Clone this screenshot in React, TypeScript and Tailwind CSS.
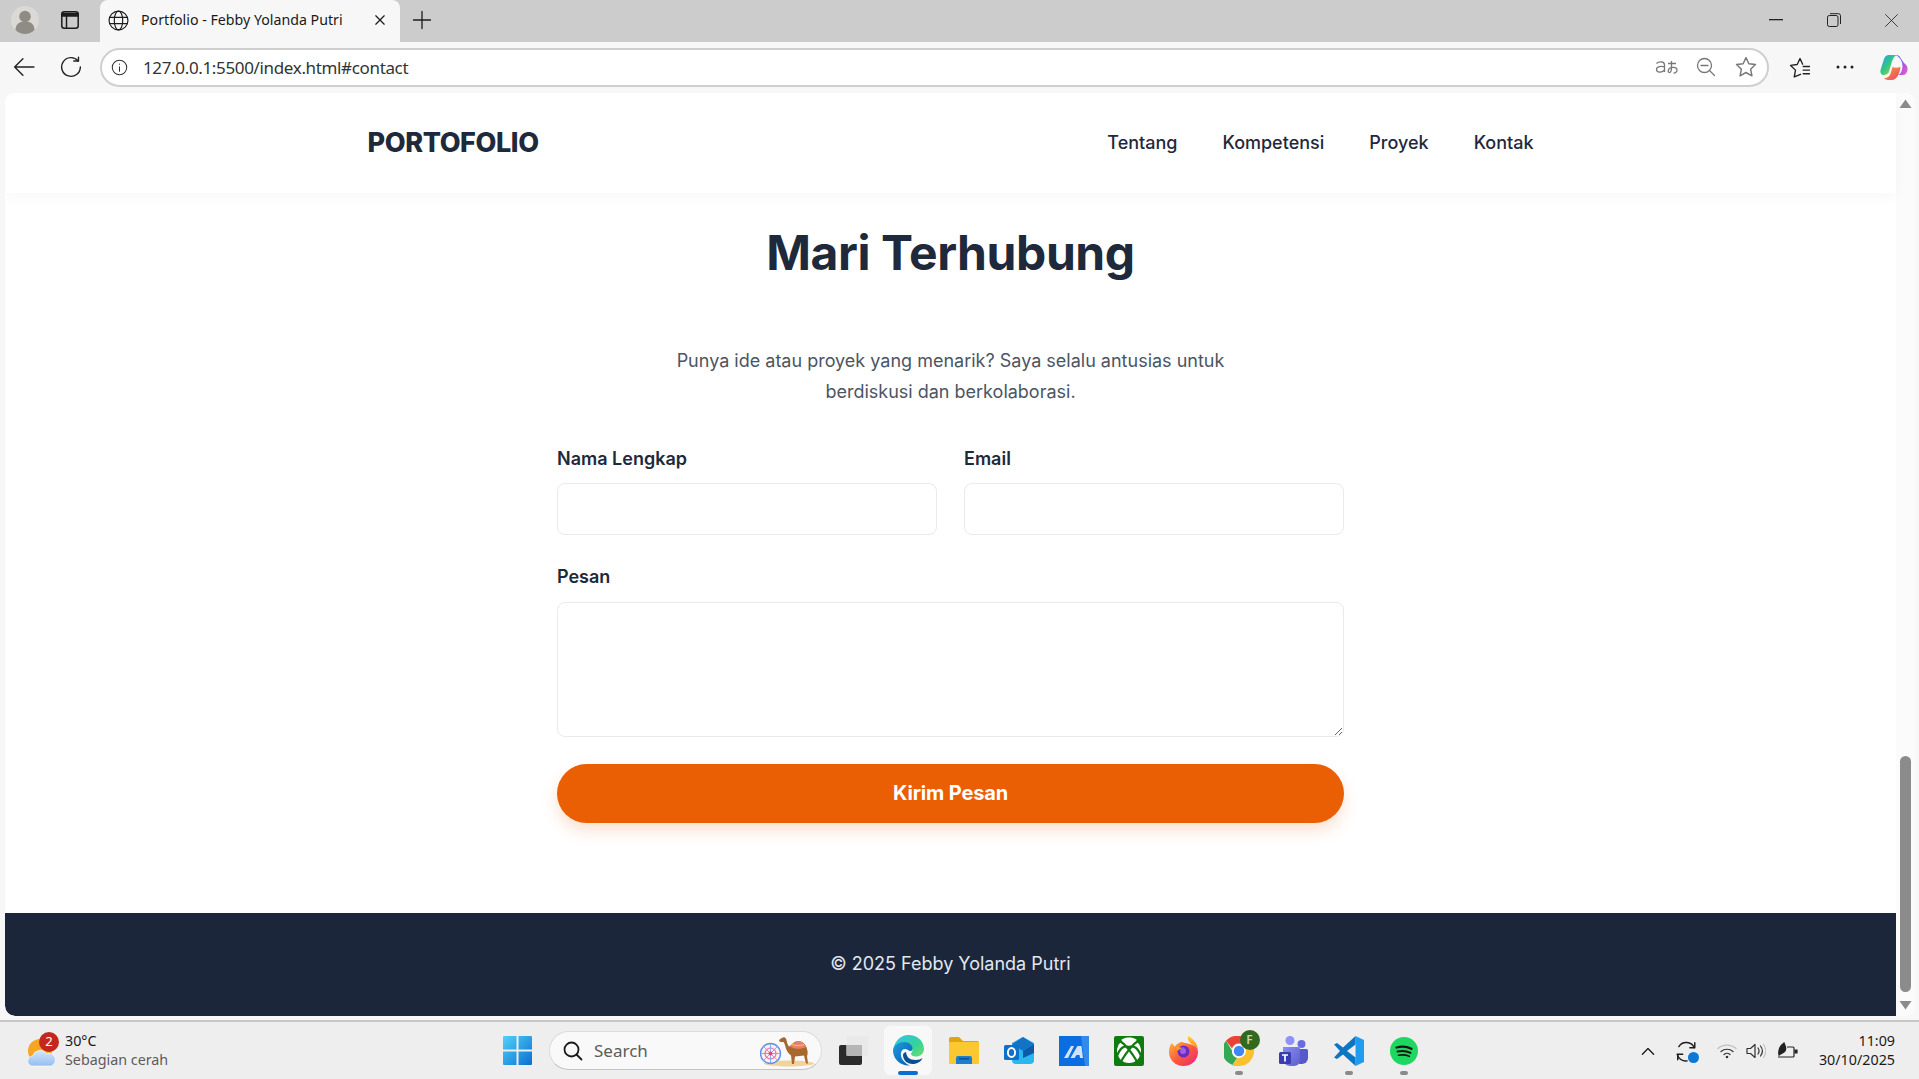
import type { ReactNode } from 'react';

const chromeFont = { fontFamily: '"Noto Sans", "Open Sans", sans-serif' };

const Stroke = ({ size = 20, children, color = '#222', width = 1.4 }: { size?: number; children: ReactNode; color?: string; width?: number }) => (
  <svg width={size} height={size} viewBox="0 0 20 20" fill="none" stroke={color} strokeWidth={width} strokeLinecap="round" strokeLinejoin="round">
    {children}
  </svg>
);

const TabStrip = () => (
  <div className="flex h-[42px] shrink-0 items-end bg-[#cccccc]">
    <div className="flex h-[40px] w-[50px] items-center justify-center self-start">
      <svg width="28" height="28" viewBox="0 0 28 28">
        <circle cx="14" cy="14" r="14" fill="#dbd9d5" />
        <circle cx="14" cy="10.5" r="5.8" fill="#8f8b85" />
        <path d="M4.5 24c0-6 4-8.5 9.5-8.5s9.5 2.5 9.5 8.5c-2.5 2.6-5.8 4-9.5 4s-7-1.4-9.5-4z" fill="#8f8b85" />
      </svg>
    </div>
    <div className="flex h-[40px] w-[40px] items-center justify-center self-start">
      <svg width="18" height="18" viewBox="0 0 18 18" fill="none" stroke="#1c1c1c" strokeWidth="1.5">
        <rect x="0.8" y="0.8" width="16.4" height="16.4" rx="2.5" />
        <path d="M1 2.5h16V5H1z" fill="#1c1c1c" />
        <path d="M5.5 5v12" />
      </svg>
    </div>
    <div className="ml-[10px] flex h-[42px] w-[300px] items-center rounded-t-lg bg-[#f7f7f7] pb-[2px] pl-[8px] pr-[13px]" style={chromeFont}>
      <Stroke size={21} width={1.1} color="#1c1c1c">
        <circle cx="10" cy="10" r="9" />
        <ellipse cx="10" cy="10" rx="4" ry="9" />
        <path d="M1.8 7h16.4M1.8 13h16.4" />
      </Stroke>
      <span className="ml-[12px] flex-1 text-[14.2px] text-[#1a1a1a]">Portfolio - Febby Yolanda Putri</span>
      <Stroke size={14} width={1.8} color="#1c1c1c">
        <path d="M4 4l12 12M16 4L4 16" />
      </Stroke>
    </div>
    <div className="flex h-[40px] w-[44px] items-center justify-center self-start">
      <Stroke size={20} width={1.3} color="#1c1c1c">
        <path d="M10 1.5v17M1.5 10h17" />
      </Stroke>
    </div>
    <div className="ml-auto flex h-[40px] items-center self-start">
      <div className="flex w-[58px] justify-center">
        <svg width="14" height="2"><rect width="14" height="1.3" fill="#222" /></svg>
      </div>
      <div className="flex w-[58px] justify-center">
        <svg width="14" height="14" viewBox="0 0 14 14" fill="none" stroke="#222" strokeWidth="1">
          <rect x="0.5" y="2.5" width="10.5" height="11" rx="1.8" />
          <path d="M3 0.7h8.5a2 2 0 0 1 2 2V11" />
        </svg>
      </div>
      <div className="flex w-[56px] justify-center">
        <Stroke size={15} width={1.1}>
          <path d="M2 2l16 16M18 2L2 18" />
        </Stroke>
      </div>
    </div>
  </div>
);

const CopilotIcon = () => (
  <svg width="28" height="27" viewBox="0 0 28 27">
    <defs>
      <linearGradient id="copA" x1="0" y1="0" x2="1" y2="1">
        <stop offset="0" stopColor="#1f9cf5" />
        <stop offset="0.5" stopColor="#35c97f" />
        <stop offset="1" stopColor="#f5d32e" />
      </linearGradient>
      <linearGradient id="copB" x1="0" y1="0" x2="1" y2="1">
        <stop offset="0" stopColor="#2f6df0" />
        <stop offset="0.5" stopColor="#a04fe6" />
        <stop offset="1" stopColor="#ee66c4" />
      </linearGradient>
      <linearGradient id="copC" x1="0" y1="0" x2="1" y2="1">
        <stop offset="0" stopColor="#f9a03c" />
        <stop offset="1" stopColor="#ef3f66" />
      </linearGradient>
    </defs>
    <path d="M9 1h8c-3 1-4.5 4-5.5 8l-2.5 9C8 20 6 21 4 21 1.5 21 0 19 .5 16L4 5C5 2.5 6.5 1 9 1z" fill="url(#copA)" />
    <path d="M16 1c2.5 0 4 1.5 4.800 3.500L24 9c2.500 2 4 3.500 3.500 7-.5 3-2 5-5 5h-5c3 0 4.500-4 5-8 .3-4-1.500-9-6.500-12z" fill="url(#copB)" />
    <path d="M8 26c-1.500 0-3-.8-4-2 4 0 6-2 7-6l1.500-5c2 1 5 1 8 0-.5 5-3 13-9 13z" fill="url(#copC)" />
  </svg>
);

const Toolbar = () => (
  <div className="flex h-[50px] shrink-0 items-center bg-[#f7f7f7]" style={chromeFont}>
    <div className="flex w-[47px] justify-center">
      <Stroke size={22} width={1.3}>
        <path d="M19 10H1.5M9 2.5L1.5 10 9 17.5" />
      </Stroke>
    </div>
    <div className="ml-[-1px] flex w-[49px] justify-center">
      <Stroke size={22} width={1.3}>
        <path d="M16.5 4.5A8.5 8.5 0 1 0 18.5 10" />
        <path d="M12.5 4.5h4.3V1" />
      </Stroke>
    </div>
    <div className="ml-[5px] flex h-[39px] w-[1669px] items-center rounded-full border-2 border-[#cfcfcf] bg-white pl-[9px]">
      <Stroke size={17} width={1.2} color="#333">
        <circle cx="10" cy="10" r="8.5" />
        <path d="M10 9v5.500M10 5.800v.3" />
      </Stroke>
      <span className="ml-[15px] flex-1 pt-[1px] text-[17px] tracking-[-0.35px] text-[#333]">127.0.0.1:5500/index.html#contact</span>
      <div className="flex items-center pr-[1px]">
        <div className="flex w-[40px] justify-center">
          <svg width="23" height="18" viewBox="0 0 23 18" fill="none" stroke="#777" strokeWidth="1.3">
            <path d="M1.5 5.5c2-2.200 8-2.500 8 1.500v7M9.5 9c-3-1.200-8-.8-8 2.500s5.500 3.500 8 .5" />
            <path d="M13 5.500h8M16.500 3v7c0 3-1 5-2.500 4.500s-1-4 2-4.800 6-.2 6 2.200-2 3-3.500 3.200" />
          </svg>
        </div>
        <div className="flex w-[40px] justify-center">
          <Stroke size={20} width={1.3} color="#777">
            <circle cx="8.5" cy="8.5" r="7" />
            <path d="M13.5 13.5l5 5M5 8.5h7" />
          </Stroke>
        </div>
        <div className="flex w-[40px] justify-center">
          <Stroke size={22} width={1.3} color="#777">
            <path d="M10 1.5l2.6 5.6 6 .7-4.400 4.200 1.200 6L10 15l-5.400 3 1.200-6-4.400-4.200 6-.7z" />
          </Stroke>
        </div>
      </div>
    </div>
    <div className="ml-[10px] flex w-[40px] justify-center">
      <Stroke size={21} width={1.3}>
        <path d="M11 16.5L5 19l1.2-6.5L1.5 8l6.3-.9L10.5 1.5l2.5 5.4" />
        <path d="M13.5 9h6M13.5 12.5h6M13.5 16h6" />
      </Stroke>
    </div>
    <div className="ml-[6px] flex w-[40px] justify-center">
      <svg width="18" height="4" viewBox="0 0 18 4" fill="#222">
        <circle cx="2" cy="2" r="1.5" />
        <circle cx="9" cy="2" r="1.5" />
        <circle cx="16" cy="2" r="1.5" />
      </svg>
    </div>
    <div className="ml-[9px] flex w-[40px] justify-center">
      <CopilotIcon />
    </div>
  </div>
);

const ScrollArrow = ({ down }: { down?: boolean }) => (
  <svg width="13" height="10" viewBox="0 0 13 10" fill="#8b8b8b">
    <path d={down ? 'M.5 1h12L6.500 9.500z' : 'M6.500 .5l6 8.500H.5z'} />
  </svg>
);

const Scrollbar = () => (
  <div className="flex w-[19px] shrink-0 flex-col items-center bg-[#fbfbfb] pt-[6px] pb-[6px]">
    <ScrollArrow />
    <div className="mt-auto h-[236px] w-[11px] rounded-full bg-[#8b8b8b]" />
    <div className="mt-[8px]">
      <ScrollArrow down />
    </div>
  </div>
);

const Navbar = () => (
  <nav className="relative z-10 flex h-[100px] shrink-0 justify-center bg-white pb-[2px] shadow-[0_4px_14px_rgba(0,0,0,0.035)]">
    <div className="flex w-full max-w-[1200px] items-center justify-between pr-[17px] pl-[17px]">
      <a className="pt-[2px] text-[27px] font-extrabold tracking-[-0.4px] text-[#1e293b]">PORTOFOLIO</a>
      <div className="flex gap-[45px] text-[18px] font-medium text-[#1e293b]">
        <a>Tentang</a>
        <a>Kompetensi</a>
        <a>Proyek</a>
        <a>Kontak</a>
      </div>
    </div>
  </nav>
);

const ContactSection = () => (
  <section className="flex flex-col items-center pt-[24px]">
    <h2 className="h-[72px] text-[48px] leading-[72px] font-bold tracking-[-0.4px] text-[#1e293b]">Mari Terhubung</h2>
    <p className="mt-[56px] w-[640px] text-center text-[18px] leading-[31px] text-[#4b5563]">
      Punya ide atau proyek yang menarik? Saya selalu antusias untuk
      <br />
      berdiskusi dan berkolaborasi.
    </p>
    <form className="mt-[38px] w-[787px]">
      <div className="grid grid-cols-2 gap-x-[27px]">
        <div>
          <label className="block h-[28px] text-[18px] leading-[28px] font-semibold text-[#1e293b]">Nama Lengkap</label>
          <input className="mt-[10px] block h-[52px] w-full rounded-lg border border-[#e8eaee] bg-white" />
        </div>
        <div>
          <label className="block h-[28px] text-[18px] leading-[28px] font-semibold text-[#1e293b]">Email</label>
          <input className="mt-[10px] block h-[52px] w-full rounded-lg border border-[#e8eaee] bg-white" />
        </div>
      </div>
      <label className="mt-[28px] block h-[28px] text-[18px] leading-[28px] font-semibold text-[#1e293b]">Pesan</label>
      <textarea className="mt-[11px] block h-[135px] w-full resize-y rounded-lg border border-[#e8eaee] bg-white" />
      <button
        type="button"
        className="mt-[27px] block h-[59px] w-full rounded-full bg-[#ea5e04] pb-[2px] text-[20px] font-bold tracking-[-0.15px] text-white shadow-[0_8px_16px_rgba(234,94,4,0.18)]"
      >
        Kirim Pesan
      </button>
    </form>
  </section>
);

const Footer = () => (
  <footer className="mt-auto flex h-[103px] shrink-0 items-center justify-center rounded-bl-[10px] bg-[#1b263b] pb-[2px] text-[18px] text-[#e2e8f0]">
    © 2025 Febby Yolanda Putri
  </footer>
);

const WeatherIcon = () => (
  <div className="relative h-[34px] w-[30px]">
    <svg width="30" height="30" viewBox="0 0 30 30" className="absolute top-[5px] left-0">
      <defs>
        <linearGradient id="cloud" x1="0" y1="0" x2="0" y2="1">
          <stop offset="0" stopColor="#d6e6fb" />
          <stop offset="1" stopColor="#94bdf0" />
        </linearGradient>
      </defs>
      <circle cx="13" cy="12" r="12" fill="#f5a623" />
      <path d="M6 27a5 5 0 0 1-.5-10 8 8 0 0 1 14-2.500A6.500 6.500 0 0 1 24 27z" fill="url(#cloud)" stroke="#fff" strokeWidth="0.6" />
    </svg>
    <div className="absolute top-[-2px] left-[12px] flex h-[20px] w-[20px] items-center justify-center rounded-full bg-[#c4281c] text-[13px] leading-none text-white">2</div>
  </div>
);

const StartIcon = () => (
  <svg width="29" height="29" viewBox="0 0 29 29">
    <defs>
      <linearGradient id="win" x1="0" y1="0" x2="1" y2="1">
        <stop offset="0" stopColor="#50d2fa" />
        <stop offset="1" stopColor="#0a6fd0" />
      </linearGradient>
    </defs>
    <path d="M1 0h12.500v13.500H0V1a1 1 0 0 1 1-1zM15.500 0H28a1 1 0 0 1 1 1v12.500H15.500zM0 15.500h13.500V29H1a1 1 0 0 1-1-1zM15.500 15.500H29V28a1 1 0 0 1-1 1H15.500z" fill="url(#win)" />
  </svg>
);

const CamelArt = () => (
  <svg width="54" height="32" viewBox="0 0 54 32">
    <ellipse cx="29" cy="28.5" rx="25" ry="3" fill="#f0d49c" />
    <circle cx="10.5" cy="18.5" r="10" fill="#fbeef4" stroke="#5f93e8" strokeWidth="1.4" />
    <circle cx="10.5" cy="18.5" r="5.5" fill="none" stroke="#e8709f" strokeWidth="1.2" />
    <path d="M10.5 8.500v20M.5 18.500h20M3.400 11.400l14.200 14.200M17.600 11.400L3.400 25.600" stroke="#6f9de8" strokeWidth="0.8" />
    <circle cx="10.5" cy="18.5" r="2" fill="#e0457a" />
    <path d="M20 4l4-2 2 1.500c1 2.500 1 6 3 8 2-.5 4-5 9-5.500 5 0 8 4 9 8 .8 3 1 5 0 7l1 7.500h-2l-2-8-9 1-1 7.500h-2l-1-8.500c-3-2-4.500-5-5.500-8.500-.5-2-1-4-2-5-1 0-4 .5-4.500-1.500z" fill="#a8672c" />
    <path d="M30 11.500c2-1 4-5 8-5.500 4 0 7 3 8 6-5 2.500-11 2.500-16-.5z" fill="#e8806a" />
    <path d="M32 9.500c4 1.500 8 1.500 12 0" stroke="#f3c65a" strokeWidth="1" fill="none" />
  </svg>
);

const TaskViewIcon = () => (
  <svg width="30" height="29" viewBox="0 0 30 29">
    <rect x="0" y="9" width="23" height="20" rx="2" fill="#2b2b2b" />
    <rect x="7.5" y="0" width="22" height="20" rx="2" fill="#e8e8e8" opacity="0.9" />
    <rect x="7.5" y="9" width="15.5" height="11" fill="#b5b5b5" />
  </svg>
);

const EdgeIcon = () => (
  <svg width="31" height="31" viewBox="0 0 31 31">
    <defs>
      <linearGradient id="edgeA" x1="0" y1="0" x2="1" y2="1">
        <stop offset="0" stopColor="#35c1f1" />
        <stop offset="0.6" stopColor="#34d399" />
        <stop offset="1" stopColor="#6fe06a" />
      </linearGradient>
      <linearGradient id="edgeB" x1="0" y1="0" x2="1" y2="1">
        <stop offset="0" stopColor="#1b9de2" />
        <stop offset="1" stopColor="#0c59a4" />
      </linearGradient>
    </defs>
    <path d="M15.500 0C24 0 31 6 31 14c0 5-4 7.500-8 7.500-3 0-5-1-5-2.500 0-1 1.500-1.500 1.500-4 0-3-3-6-7.500-6C6 9 .5 12.500 0 17 .5 7 7 0 15.500 0z" fill="url(#edgeA)" />
    <path d="M0 15.500C.5 10 6 7 11.500 7c4.500 0 8 3 8 6.500 0 1.800-1 2.500-2 2.500-2 0-3-2-5.500-2-3 0-4.500 3-4 6.500.5 4 4 8 9 10C7 31 0 24 0 15.500z" fill="url(#edgeB)" />
    <path d="M10 20c0 5 4 9 9.500 9 5 0 8.500-2.500 10-6-1.500 1-4 2-7 2-6 0-9-3-9.500-8-2 .5-3 1.500-3 3z" fill="#0b4f93" />
  </svg>
);

const FolderIcon = () => (
  <svg width="30" height="27" viewBox="0 0 30 27">
    <path d="M0 2a2 2 0 0 1 2-2h8l4 4h14a2 2 0 0 1 2 2v3H0z" fill="#e0a50d" />
    <rect x="0" y="5" width="30" height="22" rx="1" fill="#fcc831" />
    <path d="M7 27v-6a2 2 0 0 1 2-2h12a2 2 0 0 1 2 2v6z" fill="#1a7fd0" />
    <rect x="10" y="21" width="10" height="1.5" fill="#0c4f8a" />
  </svg>
);

const OutlookIcon = () => (
  <svg width="30" height="27" viewBox="0 0 30 27">
    <path d="M8 6l11-6 11 6v17a4 4 0 0 1-4 4H12a4 4 0 0 1-4-4z" fill="#2ab6ee" />
    <path d="M8 7l11-7 11 7-11 7z" fill="#1374c6" />
    <path d="M19 14l11-7v9l-11 5z" fill="#0d5aa8" />
    <rect x="0" y="8" width="15" height="15" rx="1.5" fill="#0f6fc9" />
    <ellipse cx="7.5" cy="15.5" rx="3.6" ry="4.5" fill="none" stroke="#fff" strokeWidth="1.9" />
  </svg>
);

const MaIcon = () => (
  <svg width="30" height="30" viewBox="0 0 30 30">
    <rect width="30" height="30" fill="#0a6ee0" />
    <path d="M22 0h8v30h-4z" fill="#4f9df0" opacity="0.6" />
    <path d="M5 22l7-12h3L9 22zM11.500 22l7-12h4l1.500 12h-3l-.5-3h-3l-2 3z" fill="#cfe3fb" />
  </svg>
);

const XboxIcon = () => (
  <svg width="30" height="30" viewBox="0 0 30 30">
    <rect width="30" height="30" rx="2" fill="#107c10" />
    <circle cx="15" cy="15" r="12" fill="#fff" />
    <path d="M6 5C11 8 18 17 24 27L27 20C24 12 20 9 15 11 10 9 6 12 3 20L6 27C12 17 19 8 24 5" fill="none" stroke="#107c10" strokeWidth="2.2" />
    <path d="M7 4c3-2 5-2.500 8-2.500S20 2 23 4l-8 5z" fill="#fff" />
  </svg>
);

const FirefoxIcon = () => (
  <svg width="29" height="30" viewBox="0 0 29 30">
    <defs>
      <linearGradient id="ffA" x1="0" y1="0" x2="1" y2="1">
        <stop offset="0" stopColor="#ffb53a" />
        <stop offset="0.5" stopColor="#ff5a3c" />
        <stop offset="1" stopColor="#e3237e" />
      </linearGradient>
      <linearGradient id="ffB" x1="0" y1="0" x2="0" y2="1">
        <stop offset="0" stopColor="#ffd23a" />
        <stop offset="1" stopColor="#ff7a1a" />
      </linearGradient>
    </defs>
    <path d="M14.500 30C6.500 30 0 24 0 16c0-4 1-7 3-9 1 2 2 3 3 3.500C7.500 8 10 6.500 13 6c5 2 16 2 16 10 0 8-6.500 14-14.500 14z" fill="url(#ffA)" />
    <path d="M19 0c5 2 10 8 10 15-1-3-3-5-5-6-2-2-6-3-5-9z" fill="url(#ffB)" />
    <circle cx="14.5" cy="15.5" r="6" fill="#6a2bbf" />
    <path d="M8.500 15c-2-1.500-2-3.500-1-5 1.500 1 4 2 8 1.500-2 1-5 1-7 3.500z" fill="#ff9a2a" />
    <circle cx="14" cy="15" r="3" fill="#a15fe8" />
  </svg>
);

const ChromeIcon = () => (
  <div className="relative h-[30px] w-[30px]">
    <svg width="30" height="30" viewBox="0 0 30 30">
      <path d="M15 0a15 15 0 0 1 13 7.500H15a7.500 7.500 0 0 0-7 4.800L2 4.800A15 15 0 0 1 15 0z" fill="#ea4335" />
      <path d="M2 4.800l6 9.700A7.500 7.500 0 0 0 13 22l-4.500 7A15 15 0 0 1 2 4.800z" fill="#34a853" />
      <path d="M28 7.500A15 15 0 0 1 15 30H8.500l4.500-8a7.500 7.500 0 0 0 8-10.500z" fill="#fbc02d" />
      <circle cx="15" cy="15" r="6" fill="#4285f4" stroke="#fff" strokeWidth="1.5" />
    </svg>
    <div className="absolute top-[-6px] left-[16px] flex h-[20px] w-[20px] items-center justify-center rounded-full bg-[#33691e] text-[12px] leading-none font-semibold text-[#c9d6b8]">F</div>
  </div>
);

const TeamsIcon = () => (
  <svg width="29" height="30" viewBox="0 0 29 30">
    <defs>
      <linearGradient id="teamsA" x1="0" y1="0" x2="1" y2="1">
        <stop offset="0" stopColor="#8b8dfa" />
        <stop offset="1" stopColor="#5b5fc7" />
      </linearGradient>
    </defs>
    <circle cx="11" cy="4.5" r="4.5" fill="#8f92f8" />
    <circle cx="22.5" cy="8" r="4" fill="#6a6de0" />
    <path d="M18 13h9.500a1.500 1.500 0 0 1 1.500 1.500V22a6 6 0 0 1-6 6h-3z" fill="#5559c9" />
    <path d="M4 11h15a2 2 0 0 1 2 2v11a6 6 0 0 1-6 6h-4a7 7 0 0 1-7-7z" fill="url(#teamsA)" />
    <rect x="0" y="16" width="12" height="12" rx="1.5" fill="#3a3db0" />
    <path d="M3 19h6M6 19v6.500" stroke="#fff" strokeWidth="1.7" />
  </svg>
);

const VsCodeIcon = () => (
  <svg width="30" height="30" viewBox="0 0 30 30">
    <path d="M21.500 0L30 4v22l-8.500 4z" fill="#1f9cf0" />
    <path d="M21.500 0L9 11.500 3 7 0 8.500l6 6.500-6 6.500L3 23l6-4.500L21.500 30z" fill="#0b76c4" />
    <path d="M21.500 8.500L13 15l8.500 6.500z" fill="#eeeeee" />
  </svg>
);

const SpotifyIcon = () => (
  <svg width="28" height="28" viewBox="0 0 28 28" fill="none" stroke="#191414" strokeLinecap="round">
    <circle cx="14" cy="14" r="14" fill="#1ed760" stroke="none" />
    <path d="M6.500 10.500c5-1.300 10.500-1 15 1.300" strokeWidth="2.3" />
    <path d="M7.500 14.600c4.500-1 9-.7 13 1.300" strokeWidth="2" />
    <path d="M8.500 18.300c4-.8 7.500-.5 10.800 1" strokeWidth="1.6" />
  </svg>
);

const TaskSlot = ({ children, mark, active }: { children: ReactNode; mark?: boolean; active?: boolean }) => (
  <div className="relative flex h-[49px] w-[55px] items-center justify-center">
    {active && <div className="absolute inset-y-0 left-[3px] w-[48px] rounded-md bg-[#f8f8f8]" />}
    <div className="relative">{children}</div>
    {mark && <div className="absolute bottom-0 left-[23.5px] h-[4px] w-[8px] rounded-full bg-[#8a8a8a]" />}
    {active && <div className="absolute bottom-0 left-[17px] h-[4px] w-[20px] rounded-full bg-[#0a6fd0]" />}
  </div>
);

const Taskbar = () => (
  <div className="flex h-[59px] shrink-0 items-center border-t-2 border-[#c6c6c6] bg-[#eeeeee]" style={chromeFont}>
    <div className="flex w-[490px] items-center pl-[27px]">
      <WeatherIcon />
      <div className="ml-[8px] pb-[2px] text-[14.3px] leading-[19px]">
        <div className="text-[#1a1a1a]">30°C</div>
        <div className="text-[#5c5c5c]">Sebagian cerah</div>
      </div>
    </div>
    <div className="flex w-[55px] justify-center">
      <StartIcon />
    </div>
    <div className="ml-[4px] flex h-[39px] w-[273px] items-center rounded-full border border-[#dcdcdc] border-b-[#c4c4c4] bg-[#f9f9f9] pl-[13px]">
      <Stroke size={20} width={1.8} color="#1c1c1c">
        <circle cx="8.5" cy="8.5" r="7" />
        <path d="M13.5 13.5l5 5" />
      </Stroke>
      <span className="ml-[11px] flex-1 text-[17px] text-[#5c5c5c]">Search</span>
      <div className="mr-[7px]">
        <CamelArt />
      </div>
    </div>
    <div className="ml-[4px] flex items-center">
      <TaskSlot><TaskViewIcon /></TaskSlot>
      <TaskSlot active><EdgeIcon /></TaskSlot>
      <TaskSlot><FolderIcon /></TaskSlot>
      <TaskSlot><OutlookIcon /></TaskSlot>
      <TaskSlot><MaIcon /></TaskSlot>
      <TaskSlot><XboxIcon /></TaskSlot>
      <TaskSlot><FirefoxIcon /></TaskSlot>
      <TaskSlot mark><ChromeIcon /></TaskSlot>
      <TaskSlot><TeamsIcon /></TaskSlot>
      <TaskSlot mark><VsCodeIcon /></TaskSlot>
      <TaskSlot mark><SpotifyIcon /></TaskSlot>
    </div>
    <div className="ml-auto flex items-center pr-[24px]">
      <Stroke size={16} width={1.7} color="#1c1c1c">
        <path d="M3 14l7-7 7 7" />
      </Stroke>
      <div className="relative ml-[19px]">
        <Stroke size={22} width={1.3} color="#1c1c1c">
          <path d="M17.5 7A8 8 0 0 0 3.5 6M2 13a8 8 0 0 0 9 6" />
          <path d="M18 2.5V7h-4.500M2.500 18v-5H7" />
        </Stroke>
        <div className="absolute right-[-2px] bottom-[-1px] h-[11px] w-[11px] rounded-full bg-[#0a78d4]" />
      </div>
      <div className="ml-[20px]">
        <svg width="20" height="16" viewBox="0 0 20 16" fill="none" strokeLinecap="round">
          <path d="M1 5.500C6 1 14 1 19 5.500" stroke="#bdbdbd" strokeWidth="1.2" />
          <path d="M4 8.500c3.500-3 8.500-3 12 0" stroke="#333" strokeWidth="1.2" />
          <path d="M7 11.500c1.800-1.500 4.200-1.500 6 0" stroke="#333" strokeWidth="1.2" />
          <circle cx="10" cy="14" r="1.3" fill="#333" />
        </svg>
      </div>
      <div className="ml-[9px]">
        <svg width="20" height="18" viewBox="0 0 20 18" fill="none" strokeLinecap="round" strokeLinejoin="round" strokeWidth="1.2">
          <path d="M1 6.500h3.500L9 2.500v13L4.500 11.500H1z" stroke="#333" />
          <path d="M12 6c1.300 1.800 1.300 4.200 0 6M14.500 4c2.300 3 2.300 7 0 10" stroke="#333" />
          <path d="M17.500 2.500c2.800 4 2.800 9 0 13" stroke="#c4c4c4" />
        </svg>
      </div>
      <div className="ml-[11px]">
        <svg width="21" height="17" viewBox="0 0 21 17" fill="none" stroke="#222" strokeWidth="1.2">
          <path d="M1 15h15a1 1 0 0 0 1-1V6a1 1 0 0 0-1-1h-6" />
          <path d="M17.500 8h2.500v3h-2.500" fill="#222" />
          <path d="M2 13c-1-5 1-9 5-12 1 3 3 5 1 8-1 2-4 2-6 4z" fill="#222" />
        </svg>
      </div>
      <div className="ml-[12px] w-[85px] pb-[2px] text-right text-[14.3px] leading-[19px] text-[#1a1a1a]">
        <div>11:09</div>
        <div>30/10/2025</div>
      </div>
    </div>
  </div>
);

export default function App() {
  return (
    <div className="flex h-screen w-full flex-col overflow-hidden bg-[#f7f7f7]" style={{ fontFamily: 'Inter, sans-serif' }}>
      <TabStrip />
      <Toolbar />
      <div className="flex min-h-0 flex-1 pt-[1px] pr-[4px] pb-[4px] pl-[5px]">
        <div className="flex min-w-0 flex-1 overflow-hidden rounded-[10px] bg-white">
          <main className="flex min-w-0 flex-1 flex-col">
            <Navbar />
            <ContactSection />
            <Footer />
          </main>
          <Scrollbar />
        </div>
      </div>
      <Taskbar />
    </div>
  );
}
